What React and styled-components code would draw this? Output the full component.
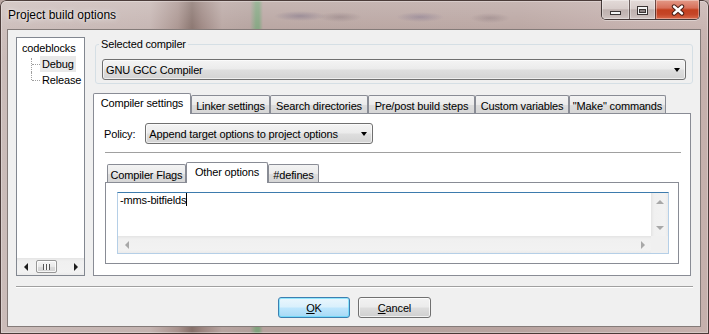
import React from "react";
import styled, { createGlobalStyle } from "styled-components";

const GlobalStyle = createGlobalStyle`
  html, body {
    margin: 0;
    padding: 0;
    background: #b9a6a2;
  }
  body {
    font-family: "Liberation Sans", Arial, sans-serif;
    font-size: 11px;
    letter-spacing: -0.15px;
    color: #000;
  }
  * {
    box-sizing: border-box;
  }
`;

// window frame (aero glass over a blurred desktop)

const Window = styled.div`
  width: 709px;
  height: 334px;
  display: flex;
  flex-direction: column;
  padding: 0 8px 7px 7px;
  border-radius: 6px 6px 0 0;
  overflow: hidden;
  background:
    linear-gradient(180deg, rgba(255, 255, 255, 0.22) 0px, rgba(255, 255, 255, 0.06) 28px, rgba(255, 255, 255, 0) 60px),
    radial-gradient(ellipse 26px 5px at 300px 16px, rgba(70, 60, 100, 0.35), rgba(70, 60, 100, 0)),
    radial-gradient(ellipse 22px 5px at 340px 17px, rgba(90, 70, 80, 0.3), rgba(90, 70, 80, 0)),
    radial-gradient(ellipse 24px 5px at 420px 17px, rgba(70, 60, 110, 0.3), rgba(70, 60, 110, 0)),
    radial-gradient(ellipse 20px 5px at 490px 18px, rgba(90, 70, 80, 0.28), rgba(90, 70, 80, 0)),
    linear-gradient(90deg, #cbbcb9 0px, #c4b3b0 150px, #a8928d 178px, #86706a 192px, #9b847f 202px, #b7a4a0 222px, #b3a09c 250px, #82a27e 256px, #82a27e 259px, #b6a29e 263px, #b8a39f 520px, #c2adaa 640px, #c6b1ad 709px);
  box-shadow: inset 0 0 0 1px rgba(50, 34, 32, 0.85), inset 0 0 0 2px rgba(255, 255, 255, 0.3);
`;

const TitleBar = styled.div`
  height: 29px;
  display: flex;
  justify-content: space-between;
  align-items: flex-start;
  padding-left: 1px;
`;

const Title = styled.div`
  padding-top: 7px;
  font-size: 12px;
  letter-spacing: 0;
  line-height: 16px;
  color: #000;
  text-shadow: 0 0 6px rgba(255, 255, 255, 0.9), 0 0 2px rgba(255, 255, 255, 0.7);
`;

const CaptionButtons = styled.div`
  display: flex;
  height: 20px;
  margin-right: 1px;
  border: 1px solid rgba(45, 35, 35, 0.85);
  border-top: none;
  border-radius: 0 0 5px 5px;
  overflow: hidden;
  box-shadow: 0 1px 0 rgba(255, 255, 255, 0.35);
`;

const CaptionButton = styled.div`
  width: ${(p) => p.w}px;
  display: flex;
  justify-content: center;
  align-items: center;
  border-left: ${(p) => (p.divider ? "1px solid rgba(60, 45, 45, 0.7)" : "none")};
  background: ${(p) =>
    p.close
      ? "linear-gradient(180deg, #e39a88 0%, #d7705a 42%, #c3401f 52%, #c54527 75%, #d9694a 100%)"
      : "linear-gradient(180deg, #e3dad8 0%, #d8cdcb 45%, #bfb1af 52%, #c6b9b7 80%, #d3c7c5 100%)"};
  box-shadow: inset 0 0 0 1px rgba(255, 255, 255, 0.35);
`;

const Glyph = styled.svg`
  display: block;
  margin-top: ${(p) => p.offset || 0}px;
`;

// client area

const Client = styled.div`
  flex: 1;
  display: flex;
  flex-direction: column;
  background: #f0f0f0;
  border: 1px solid rgba(60, 45, 42, 0.6);
  padding: 7px 7px 0 8px;
`;

const Main = styled.div`
  height: 239px;
  display: flex;
  gap: 8px;
`;

const Tree = styled.div`
  width: 69px;
  display: flex;
  flex-direction: column;
  background: #fff;
  border: 1px solid #828790;
  overflow: hidden;
`;

const TreeBody = styled.div`
  flex: 1;
  padding: 2px 0 0 3px;
`;

const TreeRow = styled.div`
  height: 16px;
  display: flex;
  padding-left: ${(p) => (p.child ? 11 : 0)}px;
`;

const Connector = styled.span`
  position: relative;
  width: 9px;
  flex: none;

  &::before {
    content: "";
    position: absolute;
    left: 0;
    top: ${(p) => (p.first ? 2 : 0)}px;
    bottom: ${(p) => (p.last ? "50%" : "0")};
    border-left: 1px dotted #a0a0a0;
  }

  &::after {
    content: "";
    position: absolute;
    left: 1px;
    right: 0;
    top: 50%;
    border-top: 1px dotted #a0a0a0;
  }
`;

const TreeLabel = styled.span`
  height: 16px;
  line-height: 16px;
  padding: 0 2px;
  white-space: nowrap;
  background: ${(p) => (p.selected ? "#e9e9e9" : "transparent")};
`;

const ScrollBar = styled.div`
  display: flex;
  flex-direction: ${(p) => (p.vertical ? "column" : "row")};
  justify-content: space-between;
  align-items: center;
  height: ${(p) => (p.vertical ? "auto" : "17px")};
  width: ${(p) => (p.vertical ? "17px" : "auto")};
  background: ${(p) =>
    p.vertical
      ? "linear-gradient(90deg, #e4e4e4 0px, #f0f0f0 3px, #f2f2f2 14px, #ebebeb 17px)"
      : "linear-gradient(180deg, #e4e4e4 0px, #f0f0f0 3px, #f2f2f2 14px, #ebebeb 17px)"};
`;

const ScrollArrow = styled.div`
  width: 17px;
  height: 17px;
  flex: none;
  display: flex;
  align-items: center;
  justify-content: center;

  &::after {
    content: "";
    width: 0;
    height: 0;
    border-style: solid;
    border-color: transparent;
    ${(p) => {
      const c = p.disabled ? "#a8a8a8" : "#1e1e1e";
      if (p.dir === "left") return `border-width: 4px 4px 4px 0; border-right-color: ${c};`;
      if (p.dir === "right") return `border-width: 4px 0 4px 4px; border-left-color: ${c};`;
      if (p.dir === "up") return `border-width: 0 4px 4px 4px; border-bottom-color: ${c};`;
      return `border-width: 4px 4px 0 4px; border-top-color: ${c};`;
    }}
  }
`;

const ScrollTrack = styled.div`
  flex: 1;
  align-self: stretch;
  display: flex;
  align-items: center;
  padding-left: 2px;
`;

const Thumb = styled.div`
  width: 21px;
  height: 13px;
  display: flex;
  align-items: center;
  justify-content: center;
  border: 1px solid #979797;
  border-radius: 2px;
  background: linear-gradient(180deg, #f5f5f5 0%, #e9e9e9 50%, #dcdcdc 51%, #d2d2d2 100%);
  box-shadow: inset 0 0 0 1px rgba(255, 255, 255, 0.8);
`;

const Grip = styled.span`
  width: 7px;
  height: 6px;
  background: repeating-linear-gradient(90deg, #555 0px, #555 1px, #f4f4f4 1px, #f4f4f4 3px);
`;

const RightCol = styled.div`
  width: 600px;
  display: flex;
  flex-direction: column;
`;

const GroupBox = styled.fieldset`
  margin: 0 0 0 2px;
  padding: 0 6px 3px 6px;
  border: 1px solid #d5dfe5;
  border-radius: 3px;
  min-width: 0;
`;

const Legend = styled.legend`
  padding: 0 2px;
  margin-left: -3px;
  line-height: 15px;
`;

const Combo = styled.div`
  width: ${(p) => (p.w ? `${p.w}px` : "auto")};
  height: 21px;
  margin-top: ${(p) => p.top || 0}px;
  display: flex;
  align-items: center;
  justify-content: space-between;
  padding: 0 5px 0 3px;
  border: 1px solid #707070;
  border-radius: 3px;
  background: linear-gradient(180deg, #f4f4f4 0%, #ebebeb 48%, #dedede 52%, #d3d3d3 100%);
  box-shadow: inset 0 0 0 1px rgba(255, 255, 255, 0.6);
  white-space: nowrap;
`;

const ComboArrow = styled.span`
  width: 0;
  height: 0;
  border-style: solid;
  border-width: 4px 3.5px 0 3.5px;
  border-color: #000 transparent transparent transparent;
`;

const TabStrip = styled.div`
  height: 20px;
  display: flex;
  align-items: flex-end;
  margin-top: ${(p) => p.top || 0}px;
  padding-left: ${(p) => p.inset || 0}px;
`;

const Tab = styled.div`
  position: relative;
  z-index: ${(p) => (p.active ? 2 : 1)};
  width: ${(p) => p.w}px;
  height: ${(p) => (p.active ? 21 : 18)}px;
  margin-bottom: ${(p) => (p.active ? -1 : 0)}px;
  padding: ${(p) => (p.active ? "0 0 2px" : "2px 0 0")};
  display: flex;
  align-items: center;
  justify-content: center;
  white-space: nowrap;
  overflow: hidden;
  border: 1px solid #898c95;
  border-bottom: none;
  border-radius: 2px 2px 0 0;
  background: ${(p) =>
    p.active ? "#fff" : "linear-gradient(180deg, #f3f3f3 0%, #ebebeb 50%, #dddddd 51%, #d6d6d6 100%)"};
`;

const Panel = styled.div`
  flex: ${(p) => (p.grow ? 1 : "none")};
  margin: ${(p) => p.margin || "0"};
  display: flex;
  flex-direction: column;
  padding: ${(p) => p.pad};
  background: #fff;
  border: 1px solid #898c95;
`;

const FieldRow = styled.div`
  display: flex;
  align-items: center;
  gap: 10px;
`;

const Rule = styled.div`
  height: 1px;
  margin: ${(p) => p.margin};
  background: #a0a0a0;
`;

const TextBox = styled.div`
  height: 62px;
  display: grid;
  grid-template-columns: 1fr 17px;
  grid-template-rows: 1fr 17px;
  border: 1px solid #b5cfe7;
  border-top-color: #3d7bad;
  background: #fff;
`;

const TextContent = styled.div`
  padding-left: 2px;
  line-height: 15px;
  white-space: pre;
`;

const Caret = styled.span`
  display: inline-block;
  width: 1px;
  height: 13px;
  vertical-align: -2px;
  background: #000;
`;

const Corner = styled.div`
  background: #f0f0f0;
`;

const Separator = styled.div`
  height: 1px;
  margin-top: 10px;
  background: #a0a0a0;
  box-shadow: 0 1px 0 #fff;
`;

const ButtonRow = styled.div`
  display: flex;
  justify-content: center;
  gap: 8px;
  margin-top: 10px;
`;

const DialogButton = styled.button`
  width: ${(p) => p.w}px;
  height: 21px;
  padding: 0;
  font: inherit;
  letter-spacing: inherit;
  color: #000;
  border: 1px solid ${(p) => (p.primary ? "#3c7fb1" : "#707070")};
  border-radius: 3px;
  background: ${(p) =>
    p.primary
      ? "linear-gradient(180deg, #eaf6fd 0%, #d9f0fc 48%, #bee6fd 52%, #a7d9f5 100%)"
      : "linear-gradient(180deg, #f2f2f2 0%, #ebebeb 48%, #dddddd 52%, #cfcfcf 100%)"};
  box-shadow: inset 0 0 0 1px ${(p) => (p.primary ? "rgba(72, 216, 251, 0.55)" : "rgba(255, 255, 255, 0.7)")};
`;

const outerTabs = [
  { label: "Compiler settings", w: 98, active: true },
  { label: "Linker settings", w: 79 },
  { label: "Search directories", w: 98 },
  { label: "Pre/post build steps", w: 107 },
  { label: "Custom variables", w: 94 },
  { label: "\"Make\" commands", w: 97 },
];

const innerTabs = [
  { label: "Compiler Flags", w: 79 },
  { label: "Other options", w: 82, active: true },
  { label: "#defines", w: 51 },
];

export default function App() {
  return (
    <>
      <GlobalStyle />
      <Window>
        <TitleBar>
          <Title>Project build options</Title>
          <CaptionButtons>
            <CaptionButton w={27}>
              <Glyph width="11" height="4" offset={6}>
                <rect x="0.5" y="0.5" width="10" height="3" fill="#f4f4f4" stroke="#3a3434" />
              </Glyph>
            </CaptionButton>
            <CaptionButton w={26} divider>
              <Glyph width="11" height="9" offset={1}>
                <rect x="0.5" y="0.5" width="10" height="8" fill="#f4f4f4" stroke="#3a3434" />
                <rect x="2.5" y="3.5" width="6" height="3" fill="#8c8282" stroke="#3a3434" />
              </Glyph>
            </CaptionButton>
            <CaptionButton w={44} divider close>
              <Glyph width="14" height="12" offset={1}>
                <path d="M3 2.5 L11 9.5 M11 2.5 L3 9.5" stroke="#4a2018" strokeWidth="4.4" strokeLinecap="round" />
                <path d="M3 2.5 L11 9.5 M11 2.5 L3 9.5" stroke="#ffffff" strokeWidth="2.4" strokeLinecap="round" />
              </Glyph>
            </CaptionButton>
          </CaptionButtons>
        </TitleBar>

        <Client>
          <Main>
            <Tree>
              <TreeBody>
                <TreeRow>
                  <TreeLabel>codeblocks</TreeLabel>
                </TreeRow>
                <TreeRow child>
                  <Connector first />
                  <TreeLabel selected>Debug</TreeLabel>
                </TreeRow>
                <TreeRow child>
                  <Connector last />
                  <TreeLabel>Release</TreeLabel>
                </TreeRow>
              </TreeBody>
              <ScrollBar>
                <ScrollArrow dir="left" />
                <ScrollTrack>
                  <Thumb>
                    <Grip />
                  </Thumb>
                </ScrollTrack>
                <ScrollArrow dir="right" />
              </ScrollBar>
            </Tree>

            <RightCol>
              <GroupBox>
                <Legend>Selected compiler</Legend>
                <Combo top={7}>
                  <span>GNU GCC Compiler</span>
                  <ComboArrow />
                </Combo>
              </GroupBox>

              <TabStrip top={9}>
                {outerTabs.map((t) => (
                  <Tab key={t.label} w={t.w} active={t.active}>
                    {t.label}
                  </Tab>
                ))}
              </TabStrip>
              <Panel grow margin="0 2px 0 0" pad="9px 9px 0 10px">
                <FieldRow>
                  <span>Policy:</span>
                  <Combo w={228}>
                    <span>Append target options to project options</span>
                    <ComboArrow />
                  </Combo>
                </FieldRow>
                <Rule margin="8px 0 0 1px" />

                <TabStrip top={9} inset={3}>
                  {innerTabs.map((t) => (
                    <Tab key={t.label} w={t.w} active={t.active}>
                      {t.label}
                    </Tab>
                  ))}
                </TabStrip>
                <Panel margin="0 2px 0 1px" pad="9px 9px 9px 11px">
                  <TextBox>
                    <TextContent>
                      -mms-bitfields
                      <Caret />
                    </TextContent>
                    <ScrollBar vertical>
                      <ScrollArrow dir="up" disabled />
                      <ScrollArrow dir="down" disabled />
                    </ScrollBar>
                    <ScrollBar>
                      <ScrollArrow dir="left" disabled />
                      <ScrollArrow dir="right" disabled />
                    </ScrollBar>
                    <Corner />
                  </TextBox>
                </Panel>
              </Panel>
            </RightCol>
          </Main>

          <Separator />

          <ButtonRow>
            <DialogButton w={72} primary>
              <u>O</u>K
            </DialogButton>
            <DialogButton w={73}>
              <u>C</u>ancel
            </DialogButton>
          </ButtonRow>
        </Client>
      </Window>
    </>
  );
}
